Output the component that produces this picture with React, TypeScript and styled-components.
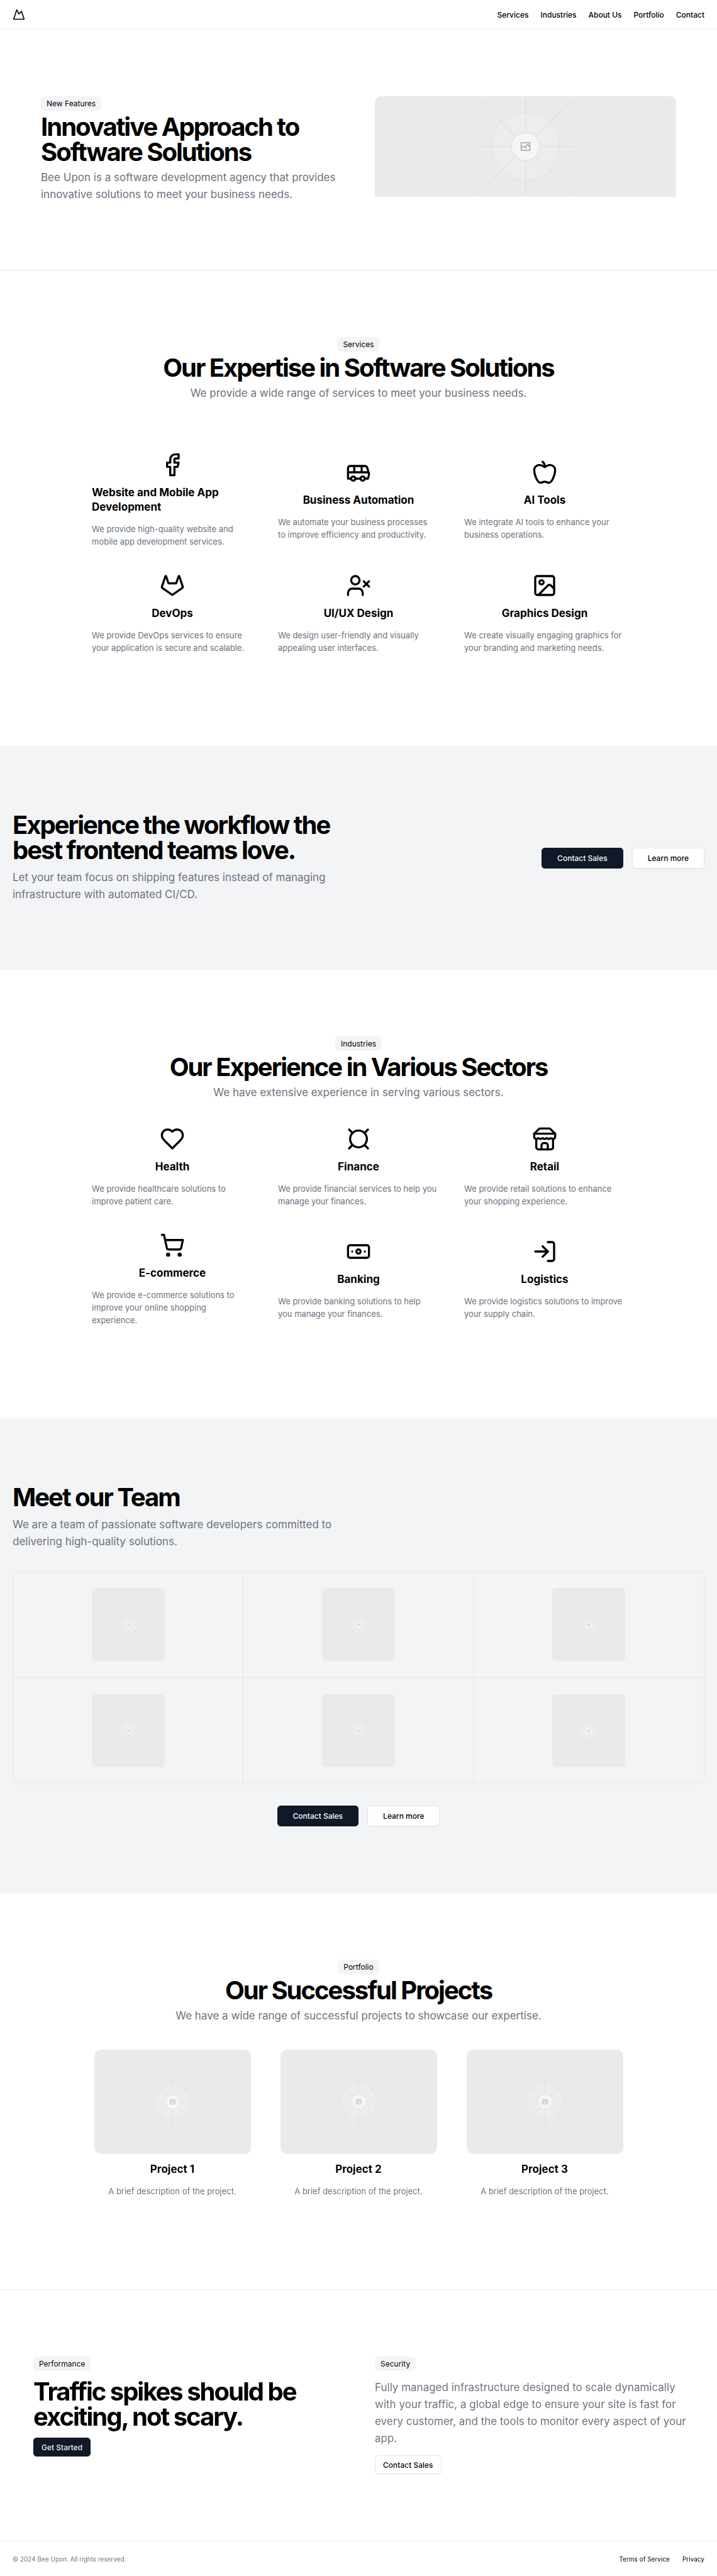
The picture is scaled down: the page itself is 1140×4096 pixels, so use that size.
import React from "react";
import styled, { createGlobalStyle, css } from "styled-components";

const color = {
  ink: "#000000",
  dark: "#111827",
  light: "#f9fafb",
  muted: "#6b7280",
  wash: "#f3f4f6",
  line: "#e5e7eb",
  white: "#ffffff",
};

const GlobalStyle = createGlobalStyle`
  *, *::before, *::after { box-sizing: border-box; }
  body {
    margin: 0;
    background: ${color.white};
    color: ${color.ink};
    font-family: Inter, "Liberation Sans", sans-serif;
  }
  h1, h2, h3, p { margin: 0; }
  a { color: inherit; text-decoration: none; }
`;

/* ---------- shell ---------- */

const Header = styled.header`
  display: flex;
  align-items: center;
  justify-content: space-between;
  height: 47px;
  padding: 0 20px;
  border-bottom: 1px solid ${color.line};
`;

const LogoLink = styled.a`
  display: flex;
`;

const Nav = styled.nav`
  display: flex;
  gap: 19px;
  font-size: 12px;
  line-height: 17px;
  font-weight: 500;
`;

const Footer = styled.footer`
  display: flex;
  align-items: center;
  justify-content: space-between;
  height: 56px;
  padding: 0 20px;
  border-top: 1px solid ${color.line};
  font-size: 10px;
  line-height: 14px;
`;

const Copyright = styled.p`
  color: ${color.muted};
`;

const FooterNav = styled.nav`
  display: flex;
  gap: 20px;
`;

const Section = styled.section<{ $wash?: boolean; $ruled?: boolean }>`
  padding: 106px 20px;
  background: ${(p) => (p.$wash ? color.wash : "transparent")};
  ${(p) =>
    p.$ruled &&
    css`
      border-bottom: 1px solid ${color.line};
    `}
`;

/* ---------- text ---------- */

const Badge = styled.span`
  display: inline-block;
  padding: 3px 9px;
  border-radius: 6px;
  background: ${color.wash};
  font-size: 12px;
  line-height: 17px;
`;

const headline = css`
  font-size: 40px;
  line-height: 40px;
  font-weight: 700;
  letter-spacing: -0.05em;
`;

const PageTitle = styled.h1`
  ${headline}
`;

const Title = styled.h2`
  ${headline}
`;

const Lead = styled.p`
  color: ${color.muted};
  font-size: 17px;
  line-height: 27px;
`;

/* ---------- buttons ---------- */

const Button = styled.button<{ $outline?: boolean; $small?: boolean }>`
  height: ${(p) => (p.$small ? 30 : 33)}px;
  padding: 0 ${(p) => (p.$small ? 12 : 24)}px;
  border: 1px solid ${(p) => (p.$outline ? color.line : color.dark)};
  border-radius: 5px;
  background: ${(p) => (p.$outline ? color.white : color.dark)};
  color: ${(p) => (p.$outline ? color.ink : color.light)};
  box-shadow: 0 1px 2px rgba(0, 0, 0, 0.06);
  font-family: inherit;
  font-size: 12px;
  line-height: 17px;
  font-weight: 500;
  cursor: pointer;
`;

const Actions = styled.div`
  display: flex;
  justify-content: center;
  gap: 14px;
`;

/* ---------- hero ---------- */

const HeroGrid = styled.div`
  display: grid;
  grid-template-columns: 1fr 1fr;
  align-items: start;
  gap: 52px;
  max-width: 1010px;
  margin: 0 auto;
`;

const Intro = styled.div<{ $centered?: boolean }>`
  display: flex;
  flex-direction: column;
  align-items: ${(p) => (p.$centered ? "center" : "flex-start")};
  text-align: ${(p) => (p.$centered ? "center" : "left")};
  ${Badge} {
    margin-bottom: 6px;
  }
  ${Lead} {
    margin-top: 7px;
  }
`;

/* ---------- banner and team copy ---------- */

const Pitch = styled.div`
  max-width: 520px;
  ${Lead} {
    margin-top: 10px;
  }
`;

const Banner = styled.div`
  display: flex;
  align-items: center;
  justify-content: space-between;
`;

/* ---------- cards ---------- */

const CardGrid = styled.div<{ $roomy?: boolean }>`
  display: grid;
  grid-template-columns: repeat(3, 1fr);
  gap: 40px;
  max-width: 848px;
  margin: ${(p) => (p.$roomy ? 80 : 40)}px auto 40px;
`;

const Card = styled.article`
  display: flex;
  flex-direction: column;
  align-items: center;
  justify-content: center;
  gap: 13px;
`;

const CardTitle = styled.h3`
  font-size: 17px;
  line-height: 23px;
  font-weight: 700;
`;

const CardText = styled.p`
  color: ${color.muted};
  font-size: 13px;
  line-height: 20px;
`;

/* ---------- pictures ---------- */

const heroShape = css`
  width: 100%;
  height: 160px;
  border-radius: 10px 10px 0 0;
`;
const teamShape = css`
  width: 116px;
  height: 116px;
  border-radius: 6px;
`;
const projectShape = css`
  width: 249px;
  height: 166px;
  border-radius: 10px;
`;
const shapes = { hero: heroShape, team: teamShape, project: projectShape };

const Picture = styled.svg<{ $shape: keyof typeof shapes }>`
  display: block;
  background: #eaeaea;
  ${(p) => shapes[p.$shape]}
`;

const rays = [0, 45, 90, 135];

function Placeholder({ shape, label }: { shape: keyof typeof shapes; label: string }) {
  return (
    <Picture
      $shape={shape}
      viewBox="-600 -600 1200 1200"
      preserveAspectRatio="xMidYMid slice"
      role="img"
      aria-label={label}
    >
      <defs>
        <linearGradient id={`ray-${shape}`} gradientUnits="userSpaceOnUse" x1="-277" y1="0" x2="277" y2="0">
          <stop offset="0" stopColor="#c9c9c9" stopOpacity="0" />
          <stop offset="0.21" stopColor="#c9c9c9" />
          <stop offset="0.79" stopColor="#c9c9c9" />
          <stop offset="1" stopColor="#c9c9c9" stopOpacity="0" />
        </linearGradient>
      </defs>
      <g opacity="0.5">
        <g opacity="0.5">
          <circle r="136.6" fill="#fafafa" />
          <circle r="135.4" fill="none" stroke="#c9c9c9" strokeWidth="2.4" />
        </g>
        {rays.map((angle) => {
          const reach = angle % 90 === 0 ? 200 : 277;
          return (
            <rect
              key={angle}
              x={-reach}
              y="-1.2"
              width={reach * 2}
              height="2.4"
              fill={`url(#ray-${shape})`}
              transform={`rotate(${angle})`}
            />
          );
        })}
      </g>
      <circle r="56" fill="#f5f5f5" stroke="#d8d8d8" strokeWidth="2.4" />
      <g fill="none" stroke="#9a9a9a" strokeWidth="3.4">
        <rect x="-17" y="-15.5" width="34" height="31" />
        <path d="M-17 4.5C-12-1-7-1-2 1.5L4 7.5M-2 1.5L8-8L17 1" />
      </g>
    </Picture>
  );
}

const TeamGrid = styled.div`
  display: grid;
  grid-template-columns: repeat(3, 1fr);
  gap: 1px;
  margin: 33px 0 34px;
  overflow: hidden;
  border: 1px solid ${color.line};
  border-radius: 8px;
  background: ${color.line};
`;

const TeamCell = styled.div`
  display: flex;
  justify-content: center;
  padding: 26px;
  background: ${color.wash};
`;

/* ---------- closing columns ---------- */

const Closing = styled.div`
  display: grid;
  grid-template-columns: 1fr 1fr;
  gap: 39px;
  padding: 0 20px 0 33px;
`;

const ClosingColumn = styled.div`
  display: flex;
  flex-direction: column;
  align-items: flex-start;
  gap: 13px;
`;

/* ---------- icons ---------- */

const Glyph = styled.svg<{ $size: number }>`
  display: block;
  flex: none;
  width: ${(p) => p.$size}px;
  height: ${(p) => p.$size}px;
  fill: none;
  stroke: currentColor;
  stroke-width: 2;
  stroke-linecap: round;
  stroke-linejoin: round;
`;

const icons = {
  facebook: <path d="M18 2h-3a5 5 0 0 0-5 5v3H7v4h3v8h4v-8h3l1-4h-4V7a1 1 0 0 1 1-1h3z" />,
  bus: (
    <>
      <path d="M8 6v6M15 6v6M2 12h19.6" />
      <path d="M18 18h3s.5-1.7.8-2.8c.1-.4.2-.8.2-1.2 0-.4-.1-.8-.2-1.2l-1.4-5C20.1 6.8 19.1 6 18 6H4a2 2 0 0 0-2 2v10h3" />
      <circle cx="7" cy="18" r="2" />
      <path d="M9 18h5" />
      <circle cx="16" cy="18" r="2" />
    </>
  ),
  apple: (
    <>
      <path d="M12 20.94c1.5 0 2.75 1.06 4 1.06 3 0 6-8 6-12.22A4.91 4.91 0 0 0 17 5c-2.22 0-4 1.44-5 2-1-.56-2.78-2-5-2a4.9 4.9 0 0 0-5 4.78C2 14 5 22 8 22c1.25 0 2.5-1.06 4-1.06Z" />
      <path d="M10 2c1 .5 2 2 2 5" />
    </>
  ),
  gitlab: (
    <path d="m22 13.29-3.33-10a.42.42 0 0 0-.14-.18.38.38 0 0 0-.22-.11.39.39 0 0 0-.23.07.42.42 0 0 0-.14.18l-2.26 6.67H8.32L6.1 3.26a.42.42 0 0 0-.1-.18.38.38 0 0 0-.26-.08.39.39 0 0 0-.23.07.42.42 0 0 0-.14.18L2 13.29a.74.74 0 0 0 .27.83L12 21l9.69-6.88a.71.71 0 0 0 .31-.83Z" />
  ),
  userX: (
    <>
      <path d="M16 21v-2a4 4 0 0 0-4-4H6a4 4 0 0 0-4 4v2" />
      <circle cx="9" cy="7" r="4" />
      <path d="m17 8 5 5M22 8l-5 5" />
    </>
  ),
  image: (
    <>
      <rect width="18" height="18" x="3" y="3" rx="2" ry="2" />
      <circle cx="9" cy="9" r="2" />
      <path d="m21 15-3.086-3.086a2 2 0 0 0-2.828 0L6 21" />
    </>
  ),
  heart: (
    <path d="M19 14c1.49-1.46 3-3.21 3-5.5A5.5 5.5 0 0 0 16.5 3c-1.76 0-3 .5-4.5 2-1.5-1.5-2.74-2-4.5-2A5.5 5.5 0 0 0 2 8.5c0 2.3 1.5 4.05 3 5.5l7 7Z" />
  ),
  currency: (
    <>
      <circle cx="12" cy="12" r="8" />
      <path d="M3 3l3 3M21 3l-3 3M3 21l3-3M21 21l-3-3" />
    </>
  ),
  store: (
    <>
      <path d="m2 7 4.41-4.41A2 2 0 0 1 7.83 2h8.34a2 2 0 0 1 1.42.59L22 7" />
      <path d="M4 12v8a2 2 0 0 0 2 2h12a2 2 0 0 0 2-2v-8" />
      <path d="M15 22v-4a2 2 0 0 0-2-2h-2a2 2 0 0 0-2 2v4" />
      <path d="M2 7h20" />
      <path d="M22 7v3a2 2 0 0 1-2 2a2.7 2.7 0 0 1-1.59-.63.7.7 0 0 0-.82 0A2.7 2.7 0 0 1 16 12a2.7 2.7 0 0 1-1.59-.63.7.7 0 0 0-.82 0A2.7 2.7 0 0 1 12 12a2.7 2.7 0 0 1-1.59-.63.7.7 0 0 0-.82 0A2.7 2.7 0 0 1 8 12a2.7 2.7 0 0 1-1.59-.63.7.7 0 0 0-.82 0A2.7 2.7 0 0 1 4 12a2 2 0 0 1-2-2V7" />
    </>
  ),
  cart: (
    <>
      <circle cx="8" cy="21" r="1" />
      <circle cx="19" cy="21" r="1" />
      <path d="M2.05 2.05h2l2.66 12.42a2 2 0 0 0 2 1.58h9.78a2 2 0 0 0 1.95-1.57l1.65-7.43H5.12" />
    </>
  ),
  banknote: (
    <>
      <rect width="20" height="12" x="2" y="6" rx="2" />
      <circle cx="12" cy="12" r="2" />
      <path d="M6 12h.01M18 12h.01" />
    </>
  ),
  logIn: (
    <>
      <path d="M15 3h4a2 2 0 0 1 2 2v14a2 2 0 0 1-2 2h-4" />
      <path d="m10 17 5-5-5-5" />
      <path d="M15 12H3" />
    </>
  ),
  mountain: <path d="m8 3 4 8 5-5 5 15H2L8 3z" />,
};

type IconName = keyof typeof icons;

function Icon({ name, size = 40 }: { name: IconName; size?: number }) {
  return (
    <Glyph $size={size} viewBox="0 0 24 24" aria-hidden="true">
      {icons[name]}
    </Glyph>
  );
}

/* ---------- content ---------- */

type Item = { icon: IconName; title: string; text: string };

const navLinks = ["Services", "Industries", "About Us", "Portfolio", "Contact"];

const services: Item[] = [
  {
    icon: "facebook",
    title: "Website and Mobile App Development",
    text: "We provide high-quality website and mobile app development services.",
  },
  {
    icon: "bus",
    title: "Business Automation",
    text: "We automate your business processes to\u00a0improve efficiency and productivity.",
  },
  { icon: "apple", title: "AI Tools", text: "We integrate AI tools to enhance your business operations." },
  {
    icon: "gitlab",
    title: "DevOps",
    text: "We provide DevOps services to ensure your application is secure and scalable.",
  },
  {
    icon: "userX",
    title: "UI/UX Design",
    text: "We design user-friendly and visually appealing user interfaces.",
  },
  {
    icon: "image",
    title: "Graphics Design",
    text: "We create visually engaging graphics for your branding and marketing needs.",
  },
];

const industries: Item[] = [
  { icon: "heart", title: "Health", text: "We provide healthcare solutions to improve patient care." },
  { icon: "currency", title: "Finance", text: "We provide financial services to help you manage your finances." },
  { icon: "store", title: "Retail", text: "We provide retail solutions to enhance your shopping experience." },
  {
    icon: "cart",
    title: "E-commerce",
    text: "We provide e-commerce solutions to improve your online shopping experience.",
  },
  {
    icon: "banknote",
    title: "Banking",
    text: "We provide banking solutions to help you\u00a0manage your finances.",
  },
  { icon: "logIn", title: "Logistics", text: "We provide logistics solutions to improve your supply chain." },
];

const members = [1, 2, 3, 4, 5, 6];
const projects = ["Project 1", "Project 2", "Project 3"];

function ItemGrid({ items, roomy }: { items: Item[]; roomy?: boolean }) {
  return (
    <CardGrid $roomy={roomy}>
      {items.map((item) => (
        <Card key={item.title}>
          <Icon name={item.icon} />
          <CardTitle>{item.title}</CardTitle>
          <CardText>{item.text}</CardText>
        </Card>
      ))}
    </CardGrid>
  );
}

export default function App() {
  return (
    <>
      <GlobalStyle />
      <Header>
        <LogoLink href="#" aria-label="Bee Upon">
          <Icon name="mountain" size={20} />
        </LogoLink>
        <Nav>
          {navLinks.map((label) => (
            <a href="#" key={label}>
              {label}
            </a>
          ))}
        </Nav>
      </Header>
      <main>
        <Section $ruled>
          <HeroGrid>
            <Intro>
              <Badge>New Features</Badge>
              <PageTitle>Innovative Approach to Software Solutions</PageTitle>
              <Lead>
                Bee Upon is a software development agency that provides innovative solutions to meet your business
                needs.
              </Lead>
            </Intro>
            <Placeholder shape="hero" label="Hero" />
          </HeroGrid>
        </Section>

        <Section>
          <Intro $centered>
            <Badge>Services</Badge>
            <Title>Our Expertise in Software Solutions</Title>
            <Lead>We provide a wide range of services to meet your business needs.</Lead>
          </Intro>
          <ItemGrid items={services} roomy />
        </Section>

        <Section $wash>
          <Banner>
            <Pitch>
              <Title>Experience the workflow the best frontend teams love.</Title>
              <Lead>
                Let your team focus on shipping features instead of managing infrastructure with automated CI/CD.
              </Lead>
            </Pitch>
            <Actions>
              <Button type="button">Contact Sales</Button>
              <Button type="button" $outline>
                Learn more
              </Button>
            </Actions>
          </Banner>
        </Section>

        <Section>
          <Intro $centered>
            <Badge>Industries</Badge>
            <Title>Our Experience in Various Sectors</Title>
            <Lead>We have extensive experience in serving various sectors.</Lead>
          </Intro>
          <ItemGrid items={industries} />
        </Section>

        <Section $wash>
          <Pitch>
            <Title>Meet our Team</Title>
            <Lead>
              We are a team of passionate software developers committed to delivering high-quality solutions.
            </Lead>
          </Pitch>
          <TeamGrid>
            {members.map((n) => (
              <TeamCell key={n}>
                <Placeholder shape="team" label={`Team member ${n}`} />
              </TeamCell>
            ))}
          </TeamGrid>
          <Actions>
            <Button type="button">Contact Sales</Button>
            <Button type="button" $outline>
              Learn more
            </Button>
          </Actions>
        </Section>

        <Section $ruled>
          <Intro $centered>
            <Badge>Portfolio</Badge>
            <Title>Our Successful Projects</Title>
            <Lead>We have a wide range of successful projects to showcase our expertise.</Lead>
          </Intro>
          <CardGrid>
            {projects.map((name) => (
              <Card key={name}>
                <Placeholder shape="project" label={name} />
                <CardTitle>{name}</CardTitle>
                <CardText>A brief description of the project.</CardText>
              </Card>
            ))}
          </CardGrid>
        </Section>

        <Section>
          <Closing>
            <ClosingColumn>
              <Badge>Performance</Badge>
              <Title>Traffic spikes should be exciting, not scary.</Title>
              <Button type="button" $small>
                Get Started
              </Button>
            </ClosingColumn>
            <ClosingColumn>
              <Badge>Security</Badge>
              <Lead>
                Fully managed infrastructure designed to scale dynamically with your traffic, a global edge to ensure
                your site is fast for every customer, and the tools to monitor every aspect of your app.
              </Lead>
              <Button type="button" $small $outline>
                Contact Sales
              </Button>
            </ClosingColumn>
          </Closing>
        </Section>
      </main>
      <Footer>
        <Copyright>© 2024 Bee Upon. All rights reserved.</Copyright>
        <FooterNav>
          <a href="#">Terms of Service</a>
          <a href="#">Privacy</a>
        </FooterNav>
      </Footer>
    </>
  );
}
